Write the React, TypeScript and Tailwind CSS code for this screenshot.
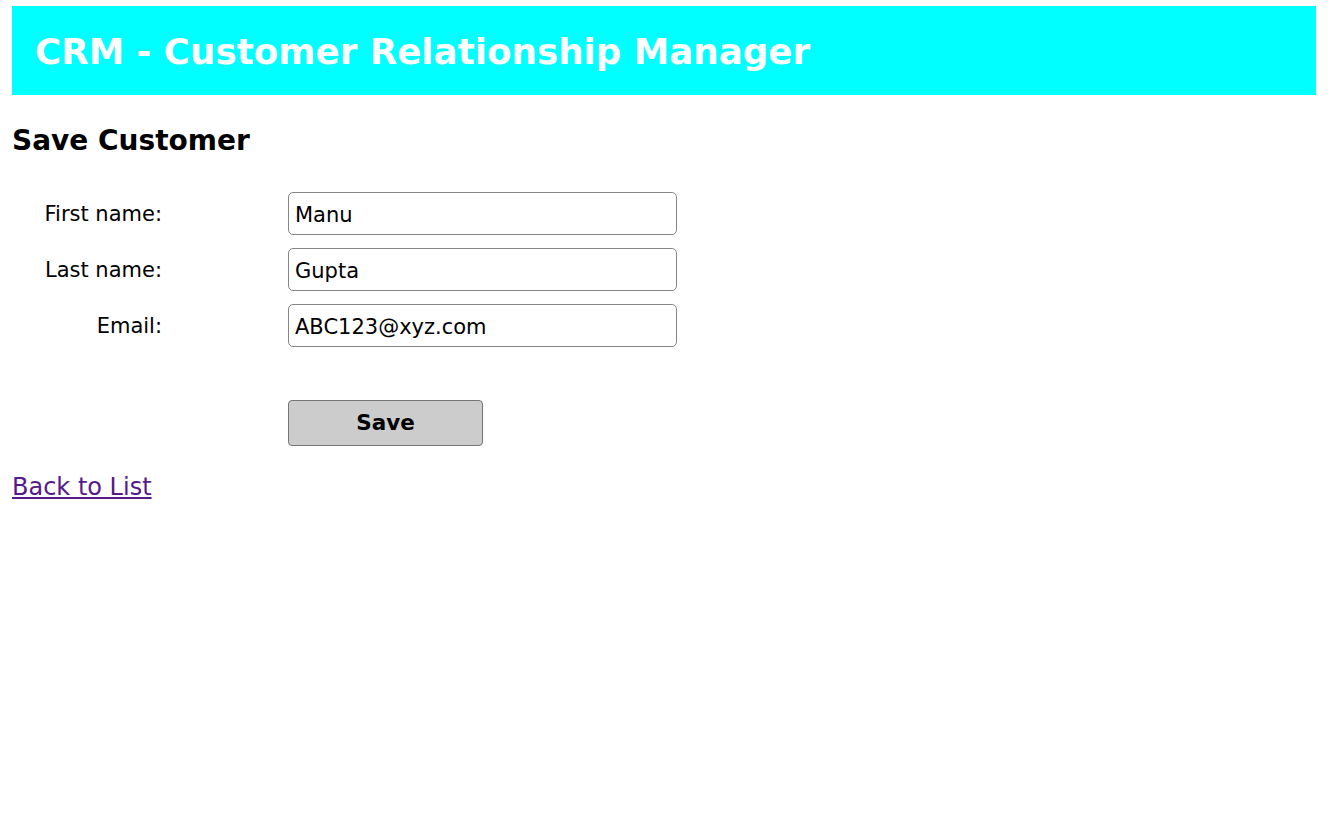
export default function App() {
  const fields = [
    { label: "First name:", value: "Manu" },
    { label: "Last name:", value: "Gupta" },
    { label: "Email:", value: "ABC123@xyz.com" },
  ];

  return (
    <div className="min-h-screen w-full bg-white pt-[6px] pl-[12px] font-['DejaVu_Sans',sans-serif] text-black">
      {/* Header bar */}
      <div className="w-[1304px] h-[89px] bg-[#00ffff] flex items-center pl-[23px] pt-[3px]">
        <h1 className="text-[35.7px] font-bold text-white leading-none">
          CRM - Customer Relationship Manager
        </h1>
      </div>

      <h2 className="mt-[32px] text-[28px] font-bold leading-none">Save Customer</h2>

      {/* Form */}
      <form className="mt-[37px] flex flex-col gap-[13px]" onSubmit={(e) => e.preventDefault()}>
        {fields.map((f) => (
          <div key={f.label} className="flex items-center">
            <label className="w-[150px] text-right text-[21px] pt-[3px]">
              {f.label}
            </label>
            <input
              defaultValue={f.value}
              className="ml-[126px] w-[389px] h-[43px] border border-[#858585] rounded-[5px] px-[6px] pt-[2px] text-[21px] outline-none"
            />
          </div>
        ))}

        <div className="mt-[40px] pl-[276px]">
          <button
            type="submit"
            className="w-[195px] h-[46px] bg-[#cccccc] border border-[#767676] rounded-[4px] text-[21.5px] font-bold"
          >
            Save
          </button>
        </div>
      </form>

      <a href="#" className="inline-block mt-[29px] text-[24px] leading-none text-[#551a8b] underline">
        Back to List
      </a>
    </div>
  );
}
